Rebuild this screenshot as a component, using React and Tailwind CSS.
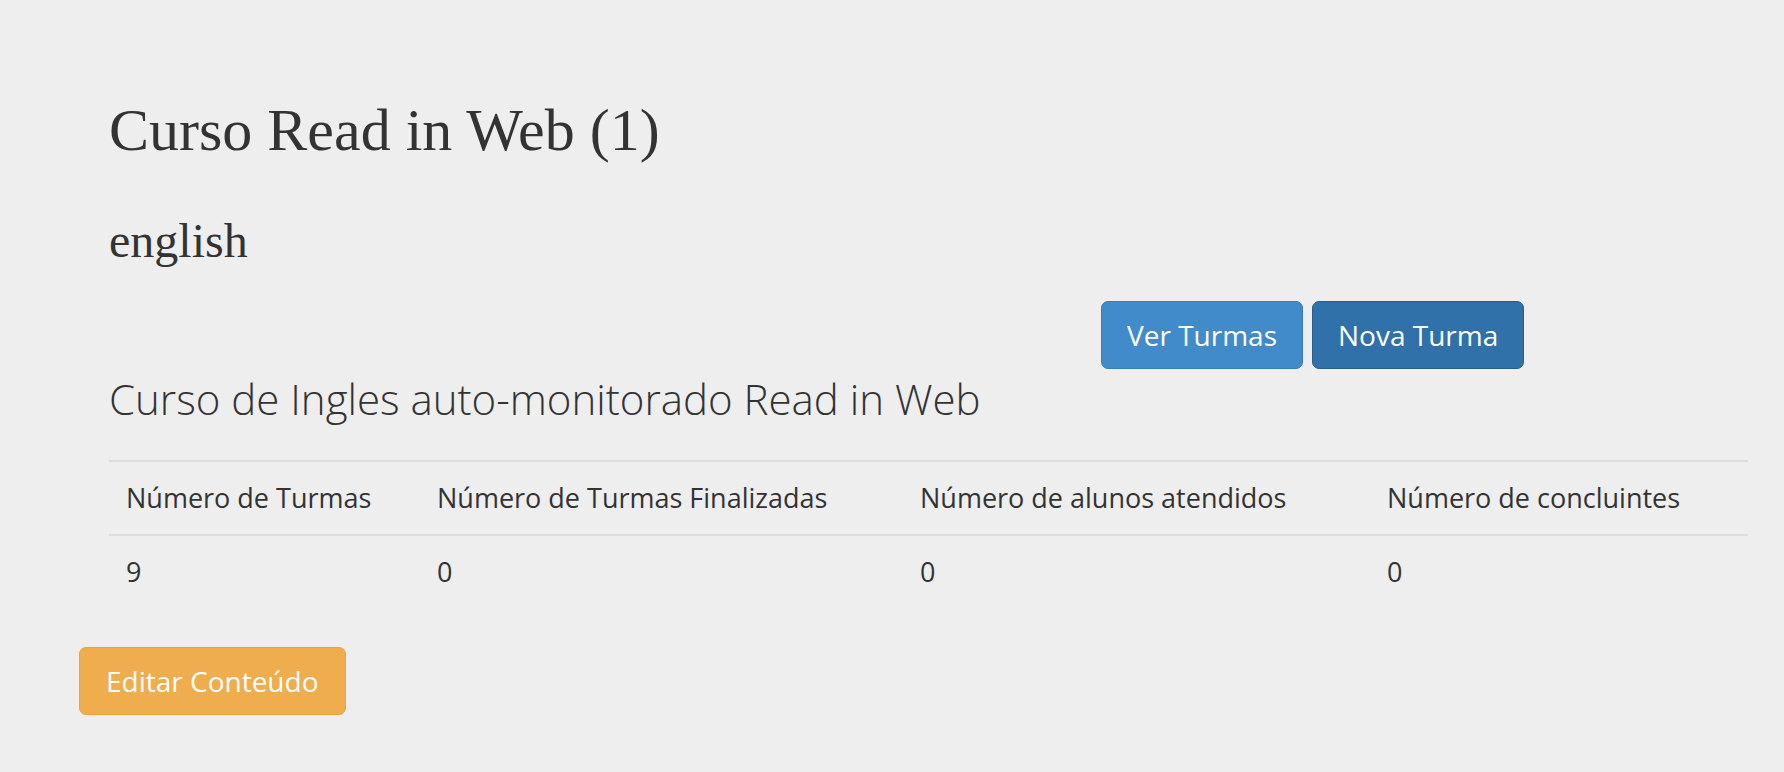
const stats = [
  { label: 'Número de Turmas', value: 9, width: 'w-[311px]' },
  { label: 'Número de Turmas Finalizadas', value: 0, width: 'w-[483px]' },
  { label: 'Número de alunos atendidos', value: 0, width: 'w-[467px]' },
  { label: 'Número de concluintes', value: 0, width: 'w-[378px]' },
];

const App = () => {
  return (
    <div className="min-h-screen bg-[#eeeeee] text-[#333333] font-['Open_Sans',sans-serif] px-[79px] pt-[97px] pb-[40px]">
      <div className="pl-[30px]">
        <h1 className="font-['Liberation_Serif',serif] text-[60px] leading-[66px]">Curso Read in Web (1)</h1>
        <h2 className="mt-[51px] font-['Liberation_Serif',serif] text-[48px] leading-[53px]">english</h2>

        <div className="mt-[34px] flex gap-[9px] pl-[992px]">
          <button className="px-[25px] py-[14px] text-[28px] leading-[38px] text-white bg-[#428bca] border border-[#357ebd] rounded-[7px]">
            Ver Turmas
          </button>
          <button className="px-[25px] py-[14px] text-[28px] leading-[38px] text-white bg-[#3071a9] border border-[#285e8e] rounded-[7px]">
            Nova Turma
          </button>
        </div>

        <h3 className="mt-[7px] text-[42px] leading-[45px] font-light">Curso de Ingles auto-monitorado Read in Web</h3>

        <table className="mt-[39px] w-[1639px] text-[27px] leading-[38px] border-collapse">
          <thead>
            <tr className="border-t-2 border-b-2 border-[#dddddd]">
              {stats.map(s => (
                <th key={s.label} className={`${s.width} text-left font-normal px-[17px] py-[17px]`}>{s.label}</th>
              ))}
            </tr>
          </thead>
          <tbody>
            <tr>
              {stats.map(s => (
                <td key={s.label} className="px-[17px] py-[17px]">{s.value}</td>
              ))}
            </tr>
          </tbody>
        </table>
      </div>

      <button className="mt-[39px] px-[26px] py-[14px] text-[28px] leading-[38px] text-white bg-[#f0ad4e] border border-[#eea236] rounded-[7px]">
        Editar Conteúdo
      </button>
    </div>
  );
};

export default App;
